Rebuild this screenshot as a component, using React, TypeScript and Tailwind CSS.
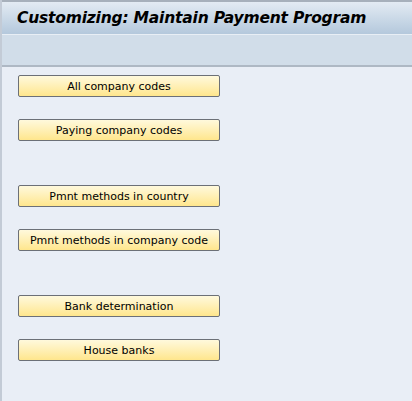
const buttons = [
  ["All company codes", "Paying company codes"],
  ["Pmnt methods in country", "Pmnt methods in company code"],
  ["Bank determination", "House banks"],
]

export default function App() {
  return (
    <div className="w-[412px] h-[401px] flex flex-col bg-[#e9eef6] border-l-2 border-[#c3cbd6] overflow-hidden font-['Tahoma','DejaVu_Sans',sans-serif]">
      <div className="h-[34px] shrink-0 border-t-2 border-[#a7b0bb] bg-gradient-to-b from-[#e3ebf3] to-[#b4c8dc] flex items-center pl-[15px] pt-[1px]">
        <span className="text-[15.5px] font-bold italic text-black tracking-[-0.2px]">
          Customizing: Maintain Payment Program
        </span>
      </div>
      <div className="h-[33px] shrink-0 border-t border-[#e8eef5] border-b-2 border-b-[#aeb8c4] bg-[#d1dde9]" />
      <div className="flex flex-col gap-[44px] pl-[16px] pt-[8px]">
        {buttons.map((group, i) => (
          <div key={i} className="flex flex-col gap-[22px]">
            {group.map(label => (
              <button
                key={label}
                className="w-[202px] h-[22px] rounded-[2px] border border-[#6c7077] bg-gradient-to-b from-[#fff9dc] to-[#ffe68c] text-[11px] text-black leading-none"
              >
                {label}
              </button>
            ))}
          </div>
        ))}
      </div>
    </div>
  )
}
